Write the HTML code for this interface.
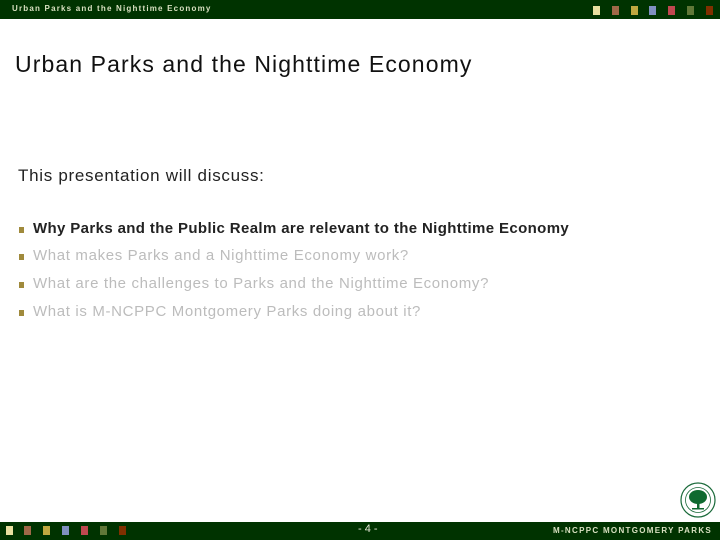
<!DOCTYPE html>
<html><head><style>
body{margin:0;width:720px;height:540px;position:relative;background:#fff;overflow:hidden;font-family:"Liberation Sans",sans-serif}
.bar{position:absolute;left:0;width:720px;background:#003300}
.sq{position:absolute;width:7px;height:9px}
.t{position:absolute;white-space:nowrap}
.b{position:absolute;left:19px;width:5px;height:6px;background:#a08a3c}
.li{position:absolute;left:33px;font-size:15px;color:#bcbcbc;white-space:nowrap;letter-spacing:0.65px}
</style></head><body>
<div class="bar" style="top:0;height:19px"></div>
<div class="t" style="left:12px;top:4px;font-size:8px;font-weight:bold;color:#d8e0c0;letter-spacing:1.2px">Urban Parks and the Nighttime Economy</div>
<div class="sq" style="left:593px;top:6px;background:#e8e0a0"></div>
<div class="sq" style="left:612px;top:6px;background:#a06848"></div>
<div class="sq" style="left:631px;top:6px;background:#c0a840"></div>
<div class="sq" style="left:649px;top:6px;background:#8090c0"></div>
<div class="sq" style="left:668px;top:6px;background:#c04850"></div>
<div class="sq" style="left:687px;top:6px;background:#607838"></div>
<div class="sq" style="left:706px;top:6px;background:#803000"></div>

<div class="t" style="left:15px;top:51px;font-size:23px;color:#111;letter-spacing:1.1px">Urban Parks and the Nighttime Economy</div>
<div class="t" style="left:18px;top:166px;font-size:17px;color:#222;letter-spacing:0.7px">This presentation will discuss:</div>

<div class="b" style="top:227px"></div><div class="li" style="top:220px;color:#222;font-weight:bold;letter-spacing:0.37px">Why Parks and the Public Realm are relevant to the Nighttime Economy</div>
<div class="b" style="top:254px"></div><div class="li" style="top:247px">What makes Parks and a Nighttime Economy work?</div>
<div class="b" style="top:282px"></div><div class="li" style="top:275px">What are the challenges to Parks and the Nighttime Economy?</div>
<div class="b" style="top:310px"></div><div class="li" style="top:303px">What is M-NCPPC Montgomery Parks doing about it?</div>

<svg style="position:absolute;left:679px;top:481px" width="38" height="38" viewBox="0 0 38 38">
<circle cx="19" cy="19" r="17" fill="#fff" stroke="#1a6a3a" stroke-width="1.2"/>
<circle cx="19" cy="19" r="12.5" fill="none" stroke="#1a6a3a" stroke-width="0.8"/>
<ellipse cx="19" cy="16" rx="9" ry="7" fill="#0f6a30"/>
<rect x="18" y="20" width="2.5" height="8" fill="#0f6a30"/>
<rect x="13" y="27" width="12" height="1.5" fill="#0f6a30"/>
</svg>

<div class="bar" style="top:522px;height:18px"></div>
<div class="sq" style="left:6px;top:526px;background:#e8e0a0"></div>
<div class="sq" style="left:24px;top:526px;background:#a06848"></div>
<div class="sq" style="left:43px;top:526px;background:#c0a840"></div>
<div class="sq" style="left:62px;top:526px;background:#8090c0"></div>
<div class="sq" style="left:81px;top:526px;background:#c04850"></div>
<div class="sq" style="left:100px;top:526px;background:#607838"></div>
<div class="sq" style="left:119px;top:526px;background:#803000"></div>
<div class="t" style="left:358px;top:523px;font-size:11px;color:#e8e8d8">- 4 -</div>
<div class="t" style="left:553px;top:526px;font-size:8px;font-weight:bold;color:#d8e0c0;letter-spacing:1.3px">M-NCPPC MONTGOMERY PARKS</div>
</body></html>
